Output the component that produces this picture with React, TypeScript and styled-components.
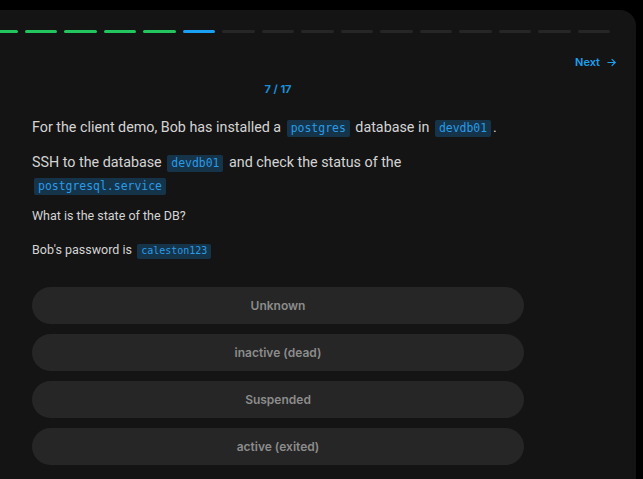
import React from 'react';
import styled, { createGlobalStyle } from 'styled-components';

const GlobalStyle = createGlobalStyle`
  html, body {
    margin: 0;
    padding: 0;
    background: #000;
    overflow: hidden;
  }
  body {
    font-family: Roboto, "Noto Sans", sans-serif;
  }
`;

const Panel = styled.div`
  margin: 10px 0 0 -80px;
  width: 716px;
  height: 560px;
  box-sizing: border-box;
  padding: 20px 26px;
  background: #141414;
  border-radius: 16px;
`;

const Progress = styled.div`
  display: flex;
  gap: 7px;
  height: 3px;
`;

type SegState = 'done' | 'current' | 'todo';

const Segment = styled.div<{ $state: SegState }>`
  flex: 1;
  border-radius: 2px;
  background: ${({ $state }) =>
    $state === 'done' ? '#22c55e' : $state === 'current' ? '#1aa0f2' : '#262626'};
`;

const TopRow = styled.div`
  display: flex;
  justify-content: flex-end;
  margin: 22px -7px 0 0;
`;

const NextButton = styled.button`
  display: flex;
  align-items: center;
  gap: 6px;
  background: none;
  border: none;
  padding: 0;
  font-family: Inter, sans-serif;
  font-size: 11px;
  font-weight: 600;
  line-height: 14px;
  color: #1aa0f2;
  cursor: pointer;
`;

const Content = styled.div`
  width: 492px;
  margin: 0 auto;
`;

const Counter = styled.div`
  margin-top: 13px;
  text-align: center;
  font-family: Inter, sans-serif;
  font-size: 11px;
  font-weight: 700;
  line-height: 14px;
  color: #1a8fd8;
`;

const Lead = styled.p<{ $gap: number }>`
  margin: ${({ $gap }) => $gap}px 0 0;
  font-size: 14.3px;
  line-height: 23px;
  color: #d4d4d4;
`;

const Small = styled.p<{ $gap: number }>`
  margin: ${({ $gap }) => $gap}px 0 0;
  font-size: 12.5px;
  line-height: 18px;
  color: #d4d4d4;
`;

const Code = styled.code`
  display: inline-block;
  padding: 0 4px;
  margin: 0 2px;
  border-radius: 2px;
  background: #15344a;
  color: #2b9be6;
  font-family: "DejaVu Sans Mono", monospace;
  font-size: 0.8em;
  line-height: 1.45;
`;

const Options = styled.div`
  display: flex;
  flex-direction: column;
  gap: 10px;
  margin-top: 28px;
`;

const Option = styled.button`
  height: 37px;
  border: none;
  border-radius: 999px;
  background: #262626;
  color: #8c8c8c;
  font-family: Inter, sans-serif;
  font-size: 12px;
  font-weight: 600;
  cursor: pointer;
`;

const ArrowIcon = () => (
  <svg width="11" height="11" viewBox="0 0 24 24" fill="none" stroke="currentColor" strokeWidth="2.4" strokeLinecap="round" strokeLinejoin="round">
    <path d="M4 12h16" />
    <path d="M13 5l7 7-7 7" />
  </svg>
);

const total = 17;
const current = 7;
const answers = ['Unknown', 'inactive (dead)', 'Suspended', 'active (exited)'];

export default function App() {
  return (
    <>
      <GlobalStyle />
      <Panel>
        <Progress>
          {Array.from({ length: total }, (_, i) => (
            <Segment
              key={i}
              $state={i + 1 < current ? 'done' : i + 1 === current ? 'current' : 'todo'}
            />
          ))}
        </Progress>
        <TopRow>
          <NextButton>
            Next <ArrowIcon />
          </NextButton>
        </TopRow>
        <Content>
          <Counter>
            {current} / {total}
          </Counter>
          <Lead $gap={20}>
            For the client demo, Bob has installed a <Code>postgres</Code> database in{' '}
            <Code>devdb01</Code>.
          </Lead>
          <Lead $gap={12}>
            SSH to the database <Code>devdb01</Code> and check the status of the{' '}
            <Code>postgresql.service</Code>
          </Lead>
          <Small $gap={10}>What is the state of the DB?</Small>
          <Small $gap={16}>
            Bob's password is <Code>caleston123</Code>
          </Small>
          <Options>
            {answers.map((a) => (
              <Option key={a}>{a}</Option>
            ))}
          </Options>
        </Content>
      </Panel>
    </>
  );
}
